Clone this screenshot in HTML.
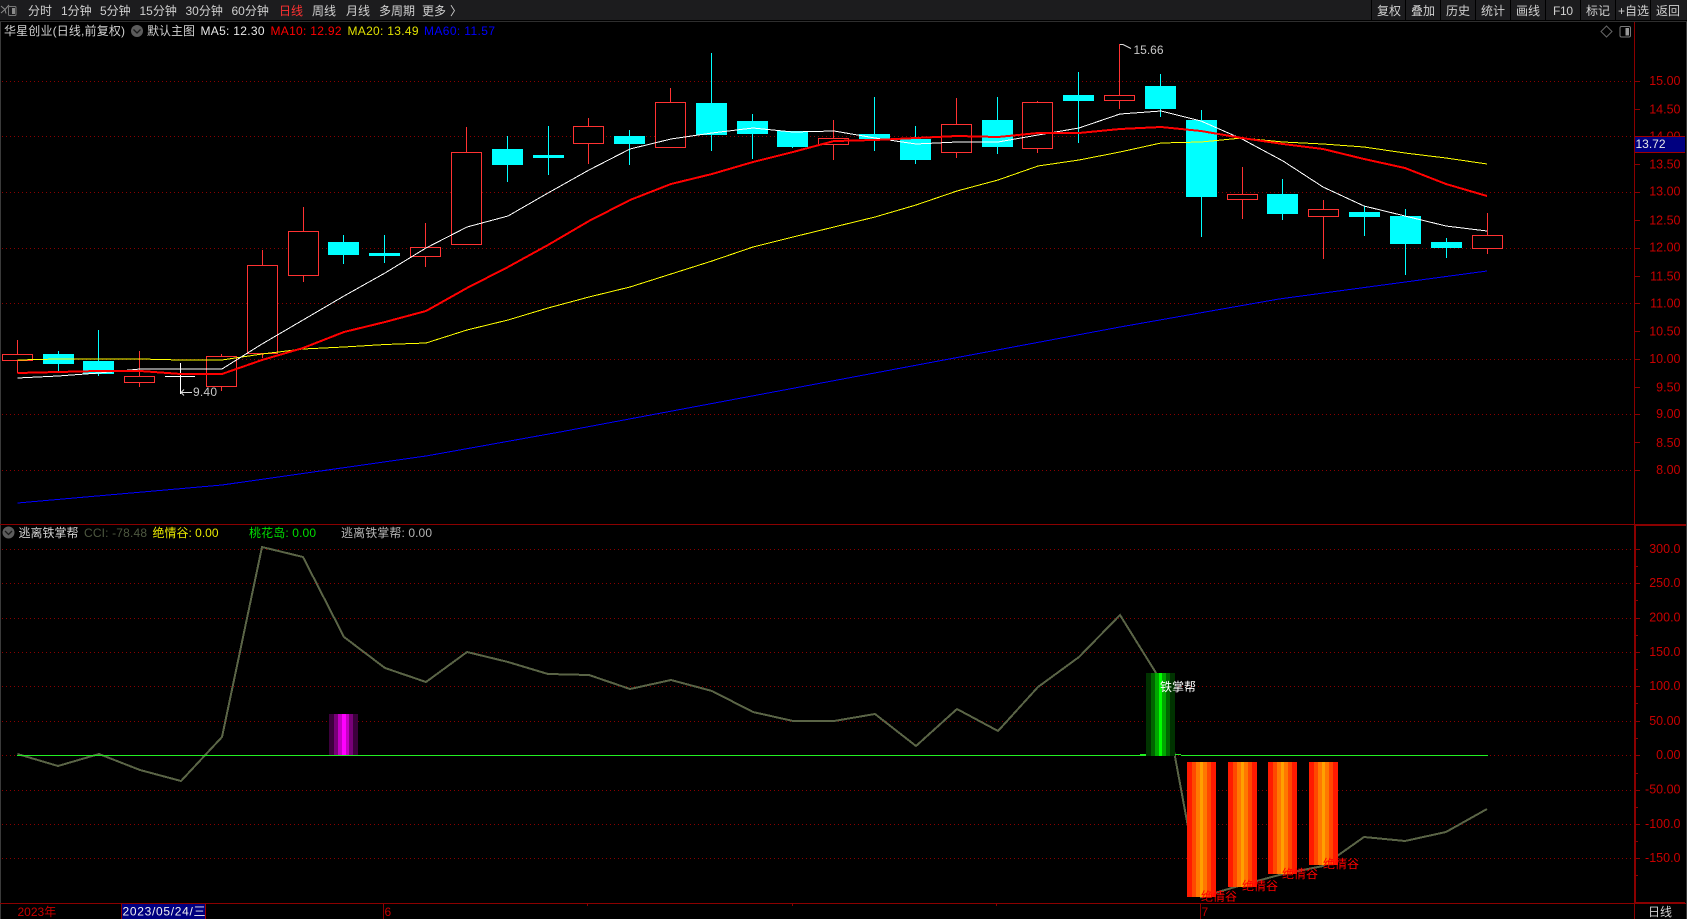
<!DOCTYPE html>
<html lang="zh"><head><meta charset="utf-8"><title>华星创业</title>
<style>
html,body{margin:0;padding:0;background:#000;width:1687px;height:919px;overflow:hidden}
svg{display:block}
text{font-family:"Liberation Sans","Noto Sans CJK SC",sans-serif;font-size:12px;white-space:pre}
.m{fill:#d0d0d0}
.a{fill:#c80000;text-anchor:end;font-size:12.5px}
.c{shape-rendering:crispEdges}
</style></head><body>
<svg width="1687" height="919" viewBox="0 0 1687 919" xmlns="http://www.w3.org/2000/svg">
<rect width="1687" height="919" fill="#000"/>
<!-- menu bar -->
<g class="c">
<rect x="0" y="0" width="1687" height="20" fill="#1c1c1e"/>
<rect x="0" y="21" width="1687" height="1" fill="#2e2e2e"/>
<rect x="0" y="22" width="1" height="897" fill="#3a3a3a"/>
<rect x="1686" y="22" width="1" height="897" fill="#3a3a3a"/>
<path d="M1371.500 0V20M1405.500 0V20M1440.500 0V20M1475.500 0V20M1510.500 0V20M1545.500 0V20M1580.500 0V20M1615.500 0V20M1650.500 0V20" stroke="#000" stroke-width="1"/>
</g>
<path d="M1 6l4 3.500-4 3.500M9 5l-4 4.500 1 4" fill="none" stroke="#8a8a8a" stroke-width="1"/>
<rect x="8.500" y="6.500" width="7.500" height="9" rx="1" fill="#1c1c1e" stroke="#777"/>
<rect x="12" y="8" width="3" height="6" fill="#8a8a8a"/>
<g class="m">
<text x="28" y="15">分时</text>
<text x="61" y="15">1分钟</text>
<text x="100" y="15">5分钟</text>
<text x="139.500" y="15">15分钟</text>
<text x="185.500" y="15">30分钟</text>
<text x="231.500" y="15">60分钟</text>
<text x="279" y="15" style="fill:#ff3232">日线</text>
<text x="312" y="15">周线</text>
<text x="346" y="15">月线</text>
<text x="379" y="15">多周期</text>
<text x="422" y="15">更多</text>
<text x="450" y="15">〉</text>
<text x="1377" y="15">复权</text>
<text x="1411" y="15">叠加</text>
<text x="1446" y="15">历史</text>
<text x="1481" y="15">统计</text>
<text x="1516" y="15">画线</text>
<text x="1553" y="15" textLength="20">F10</text>
<text x="1586" y="15">标记</text>
<text x="1618" y="15">+自选</text>
<text x="1656" y="15">返回</text>
</g>
<!-- header -->
<text x="4" y="35" class="m" textLength="121">华星创业(日线,前复权)</text>
<circle cx="137" cy="31" r="6" fill="#5c5c5c"/>
<path d="M133.500 29.500l3.500 3.500 3.500-3.500" fill="none" stroke="#1a1a1a" stroke-width="1.300"/>
<text x="147" y="35" class="m">默认主图</text>
<text x="200.500" y="35" fill="#e8e8e8" textLength="64">MA5: 12.30</text>
<text x="270.500" y="35" fill="#ff0000" textLength="71">MA10: 12.92</text>
<text x="347.500" y="35" fill="#e0e000" textLength="71">MA20: 13.49</text>
<text x="424" y="35" fill="#0000ff" textLength="71">MA60: 11.57</text>
<path d="M1606.500 26l5.500 5.500-5.500 5.500-5.500-5.500z" fill="none" stroke="#666"/>
<rect x="1620" y="26.500" width="10.500" height="10.500" rx="1.500" fill="none" stroke="#777"/>
<rect x="1625.500" y="28" width="3.500" height="7.500" fill="#999"/>
<!-- grids -->
<path d="M2 81.500H1634M2 136.500H1634M2 192.500H1634M2 248.500H1634M2 303.500H1634M2 359.500H1634M2 414.500H1634M2 470.500H1634M2 549.500H1634M2 583.500H1634M2 618.500H1634M2 652.500H1634M2 686.500H1634M2 721.500H1634M2 755.500H1634M2 790.500H1634M2 824.500H1634M2 858.500H1634" stroke="#8a0000" stroke-width="1" stroke-dasharray="1 3" class="c"/>
<!-- wicks -->
<path class="c" fill="none" stroke="#ff3232" d="M17.500 340V373M139.500 351V387M221.500 354V391M262.500 250V358M303.500 207V282M425.500 223V267M466.500 127V245M588.500 118V164M670.500 88V148M833.500 120V160M956.500 98V158M1037.500 101V153M1119.500 44V109M1242.500 167V219M1323.500 200V259M1487.500 213V254"/>
<path class="c" fill="none" stroke="#00ffff" d="M58.500 351V372M98.500 330V376M343.500 235V264M384.500 235V263M507.500 136V182M548.500 126V175M629.500 130V165M711.500 53V151M752.500 114V159M792.500 131V148M874.500 97V151M915.500 126V164M997.500 97V154M1078.500 72V143M1160.500 74V117M1201.500 110V237M1282.500 179V220M1364.500 206V236M1405.500 209V275M1446.500 238V258"/>
<path class="c" fill="none" stroke="#ffffff" d="M180.500 363V394M165 376.500H195"/>
<!-- red bodies -->
<g class="c" fill="#000" stroke="#ff3232">
<rect x="2.500" y="354.500" width="30" height="6"/>
<rect x="124.500" y="376.500" width="30" height="6"/>
<rect x="206.500" y="356.500" width="30" height="30"/>
<rect x="247.500" y="265.500" width="30" height="88"/>
<rect x="288.500" y="231.500" width="30" height="44"/>
<rect x="410.500" y="247.500" width="30" height="9"/>
<rect x="451.500" y="152.500" width="30" height="92"/>
<rect x="573.500" y="126.500" width="30" height="17"/>
<rect x="655.500" y="102.500" width="30" height="45"/>
<rect x="818.500" y="138.500" width="30" height="6"/>
<rect x="941.500" y="124.500" width="30" height="28"/>
<rect x="1022.500" y="102.500" width="30" height="46"/>
<rect x="1104.500" y="95.500" width="30" height="5"/>
<rect x="1227.500" y="194.500" width="30" height="5"/>
<rect x="1308.500" y="209.500" width="30" height="7"/>
<rect x="1472.500" y="235.500" width="30" height="13"/>
</g>
<!-- cyan bodies -->
<g class="c" fill="#00ffff">
<rect x="43" y="354" width="31" height="10"/>
<rect x="83" y="361" width="31" height="13"/>
<rect x="328" y="242" width="31" height="13"/>
<rect x="369" y="253" width="31" height="3"/>
<rect x="492" y="149" width="31" height="16"/>
<rect x="533" y="155" width="31" height="3"/>
<rect x="614" y="136" width="31" height="8"/>
<rect x="696" y="103" width="31" height="32"/>
<rect x="737" y="121" width="31" height="13"/>
<rect x="777" y="131" width="31" height="16"/>
<rect x="859" y="134" width="31" height="5"/>
<rect x="900" y="139" width="31" height="21"/>
<rect x="982" y="120" width="31" height="27"/>
<rect x="1063" y="95" width="31" height="6"/>
<rect x="1145" y="86" width="31" height="23"/>
<rect x="1186" y="120" width="31" height="77"/>
<rect x="1267" y="194" width="31" height="20"/>
<rect x="1349" y="212" width="31" height="5"/>
<rect x="1390" y="216" width="31" height="28"/>
<rect x="1431" y="242" width="31" height="6"/>
</g>
<!-- MA lines -->
<g fill="none" class="c">
<polyline stroke="#0000ff" stroke-width="1" points="17.500,503 222,485 426,456 560,432 1120,327 1279,299 1487,271"/>
<polyline stroke="#ffff00" stroke-width="1" points="17.500,360 58,359 99,359 140,359 181,360 222,360 262,354 303,349 344,347 385,344.500 426,343 467,330 508,320 548,308 589,297 630,287 671,274 712,261 753,247 793,237 834,227 875,217 916,205 957,191 998,180 1038,166 1079,160 1120,152 1161,143 1201,142 1242,138 1283,142 1323,144 1364,147 1405,153 1446,158 1487,164"/>
<polyline stroke="#ffffff" stroke-width="1" points="17.500,378 58,376 99,373 140,369 181,369 222,369 262,344 303,320 344,296 385,273 426,248 467,227 508,216 548,193 589,170 630,149 671,139 712,133 753,128 793,132 834,131 875,138 916,144 957,142 998,142 1038,135 1079,128 1120,114 1161,111 1201,121 1242,139 1283,161 1323,187 1364,206 1405,216 1446,226 1487,231"/>
<polyline stroke="#ff0000" stroke-width="2" points="17.500,373 58,372 99,371 140,371 181,374 222,374 262,360 303,348 344,332 385,322 426,311 467,288 508,267 548,245 589,221 630,200 671,184 712,174 753,162 793,152 834,141 875,140 916,138 957,136 998,137 1038,133 1079,133 1120,129 1161,127 1201,131 1242,138 1283,144 1323,149 1364,159 1405,168 1446,184 1487,196"/>
</g>
<!-- price markers -->
<path d="M181 392.500H192M181 392.500l3-3M181 392.500l3 3" fill="none" stroke="#ddd" stroke-width="1"/>
<text x="193" y="396" fill="#c8c8c8" textLength="24">9.40</text>
<path d="M1120 44.500h3l8 4" fill="none" stroke="#ddd" stroke-width="1"/>
<text x="1133.500" y="54" fill="#c8c8c8" textLength="30">15.66</text>
<!-- lower panel header -->
<circle cx="8.500" cy="532.500" r="6" fill="#5c5c5c"/>
<path d="M5 531l3.500 3.500 3.500-3.500" fill="none" stroke="#1a1a1a" stroke-width="1.300"/>
<text x="18.500" y="537" class="m">逃离铁掌帮</text>
<text x="84" y="537" fill="#4e5840" textLength="63">CCI: -78.48</text>
<text x="152.500" y="537" fill="#e8e800" textLength="66">绝情谷: 0.00</text>
<text x="249" y="537" fill="#00dc00" textLength="67">桃花岛: 0.00</text>
<text x="341" y="537" fill="#b4b4b4" textLength="91">逃离铁掌帮: 0.00</text>
<!-- CCI -->
<polyline class="c" fill="none" stroke="#5a6446" stroke-width="2" points="17.500,754 58,766 99,754 140,770 181,781 222,737 262,547 303,557 344,637 385,668 426,682 467,652 508,662 548,674 589,675 630,689 671,680 712,691 753,712 793,721 834,721 875,714 916,746 957,709 998,731 1038,687 1079,657 1120,615 1161,681 1201,897 1242,885 1283,874 1323,866 1364,837 1405,841 1446,832 1487,809"/>
<!-- zero line -->
<g class="c">
<rect x="17" y="755" width="1129" height="1" fill="#22f022"/>
<rect x="1181" y="755" width="307" height="1" fill="#22f022"/>
<rect x="1175" y="754" width="6" height="1" fill="#22f022"/>
<rect x="1140" y="754" width="6" height="1" fill="#22f022"/>
</g>
<!-- magenta bar -->
<g class="c">
<rect x="329" y="714" width="29" height="41" fill="#3c003c"/>
<rect x="334" y="714" width="19" height="41" fill="#780078"/>
<rect x="338" y="714" width="11" height="41" fill="#c400c4"/>
<rect x="342" y="714" width="4" height="41" fill="#ff00ff"/>
<!-- green bar -->
<rect x="1146" y="673" width="29" height="83" fill="#003300"/>
<rect x="1151" y="673" width="19" height="83" fill="#006600"/>
<rect x="1155" y="673" width="11" height="83" fill="#00a800"/>
<rect x="1159" y="673" width="3" height="83" fill="#00ff00"/>
</g>
<!-- orange bars -->
<g class="c">
<rect x="1187" y="762" width="29" height="135" fill="#ff1a00"/><rect x="1192" y="762" width="19" height="135" fill="#ff4800"/><rect x="1196" y="762" width="11" height="135" fill="#ff7800"/><rect x="1200" y="762" width="3" height="135" fill="#ffa000"/>
<rect x="1228" y="762" width="29" height="125" fill="#ff1a00"/><rect x="1233" y="762" width="19" height="125" fill="#ff4800"/><rect x="1237" y="762" width="11" height="125" fill="#ff7800"/><rect x="1241" y="762" width="3" height="125" fill="#ffa000"/>
<rect x="1268" y="762" width="29" height="112" fill="#ff1a00"/><rect x="1273" y="762" width="19" height="112" fill="#ff4800"/><rect x="1277" y="762" width="11" height="112" fill="#ff7800"/><rect x="1281" y="762" width="3" height="112" fill="#ffa000"/>
<rect x="1309" y="762" width="29" height="103" fill="#ff1a00"/><rect x="1314" y="762" width="19" height="103" fill="#ff4800"/><rect x="1318" y="762" width="11" height="103" fill="#ff7800"/><rect x="1322" y="762" width="3" height="103" fill="#ffa000"/>
</g>
<text x="1160" y="691" fill="#fff">铁掌帮</text>
<text x="1201" y="900.500" fill="#ff0000">绝情谷</text>
<text x="1242" y="890" fill="#ff0000">绝情谷</text>
<text x="1282" y="878" fill="#ff0000">绝情谷</text>
<text x="1323" y="868" fill="#ff0000">绝情谷</text>
<!-- axes -->
<g class="c">
<rect x="0" y="524" width="1686" height="1" fill="#8b0000"/>
<rect x="1634" y="525" width="52" height="1" fill="#8b0000"/>
<rect x="1634" y="22" width="1" height="503" fill="#8b0000"/>
<rect x="1634" y="525" width="2" height="379" fill="#8b0000"/>
<rect x="0" y="903" width="1686" height="1" fill="#8b0000"/>
<rect x="1634" y="902" width="51" height="1" fill="#8b0000"/>
<rect x="1634" y="904" width="1" height="15" fill="#8b0000"/>
<path d="M1634 81.500h6M1634 109.500h6M1634 136.500h6M1634 164.500h6M1634 192.500h6M1634 220.500h6M1634 248.500h6M1634 276.500h6M1634 303.500h6M1634 331.500h6M1634 359.500h6M1634 387.500h6M1634 414.500h6M1634 442.500h6M1634 470.500h6M1636 549.500h4M1636 583.500h4M1636 618.500h4M1636 652.500h4M1636 686.500h4M1636 721.500h4M1636 755.500h4M1636 790.500h4M1636 824.500h4M1636 858.500h4M1636 566.500h2M1636 600.500h2M1636 635.500h2M1636 669.500h2M1636 703.500h2M1636 738.500h2M1636 773.500h2M1636 807.500h2M1636 841.500h2M1636 875.500h2" stroke="#8b0000" stroke-width="1"/>
<path d="M587.500 904v2M792.500 904v2M996.500 904v2" stroke="#8b0000"/>
</g>
<!-- axis labels -->
<g>
<text x="1680.500" y="85" class="a">15.00</text>
<text x="1680.500" y="113.500" class="a">14.50</text>
<text x="1680.500" y="140.500" class="a">14.00</text>
<text x="1680.500" y="168.500" class="a">13.50</text>
<text x="1680.500" y="195.500" class="a">13.00</text>
<text x="1680.500" y="224.500" class="a">12.50</text>
<text x="1680.500" y="251.500" class="a">12.00</text>
<text x="1680.500" y="280.500" class="a">11.50</text>
<text x="1680.500" y="307.500" class="a">11.00</text>
<text x="1680.500" y="335.500" class="a">10.50</text>
<text x="1680.500" y="363" class="a">10.00</text>
<text x="1680.500" y="391.500" class="a">9.50</text>
<text x="1680.500" y="418" class="a">9.00</text>
<text x="1680.500" y="447" class="a">8.50</text>
<text x="1680.500" y="474" class="a">8.00</text>
<text x="1680.500" y="553" class="a">300.0</text>
<text x="1680.500" y="587" class="a">250.0</text>
<text x="1680.500" y="621.500" class="a">200.0</text>
<text x="1680.500" y="656" class="a">150.0</text>
<text x="1680.500" y="690" class="a">100.0</text>
<text x="1680.500" y="725" class="a">50.00</text>
<text x="1680.500" y="759" class="a">0.00</text>
<text x="1680.500" y="793.500" class="a">-50.00</text>
<text x="1680.500" y="828" class="a">-100.0</text>
<text x="1680.500" y="862" class="a">-150.0</text>
</g>
<!-- current price box -->
<g class="c">
<rect x="1635" y="136" width="50" height="17" fill="#000080"/>
<rect x="1635" y="136" width="50" height="1" fill="#a00000"/>
<rect x="1635" y="152" width="50" height="1" fill="#a00000"/>
</g>
<text x="1635.500" y="148" fill="#e8e8e8" textLength="30">13.72</text>
<!-- bottom axis -->
<text x="17.500" y="916" fill="#c80000">2023年</text>
<rect x="122" y="904" width="84" height="15" fill="#000080" class="c"/>
<rect x="205" y="904" width="1" height="15" fill="#a00000" class="c"/>
<rect x="121" y="904" width="1" height="15" fill="#8b0000" class="c"/>
<text x="122.500" y="915.500" fill="#f0f0f0" textLength="83">2023/05/24/三</text>
<rect x="383" y="904" width="1" height="15" fill="#8b0000" class="c"/>
<text x="384.500" y="916" fill="#c80000">6</text>
<rect x="1200" y="904" width="1" height="15" fill="#8b0000" class="c"/>
<text x="1201.500" y="916" fill="#c80000">7</text>
<text x="1648" y="916" class="m">日线</text>
</svg>
</body></html>
